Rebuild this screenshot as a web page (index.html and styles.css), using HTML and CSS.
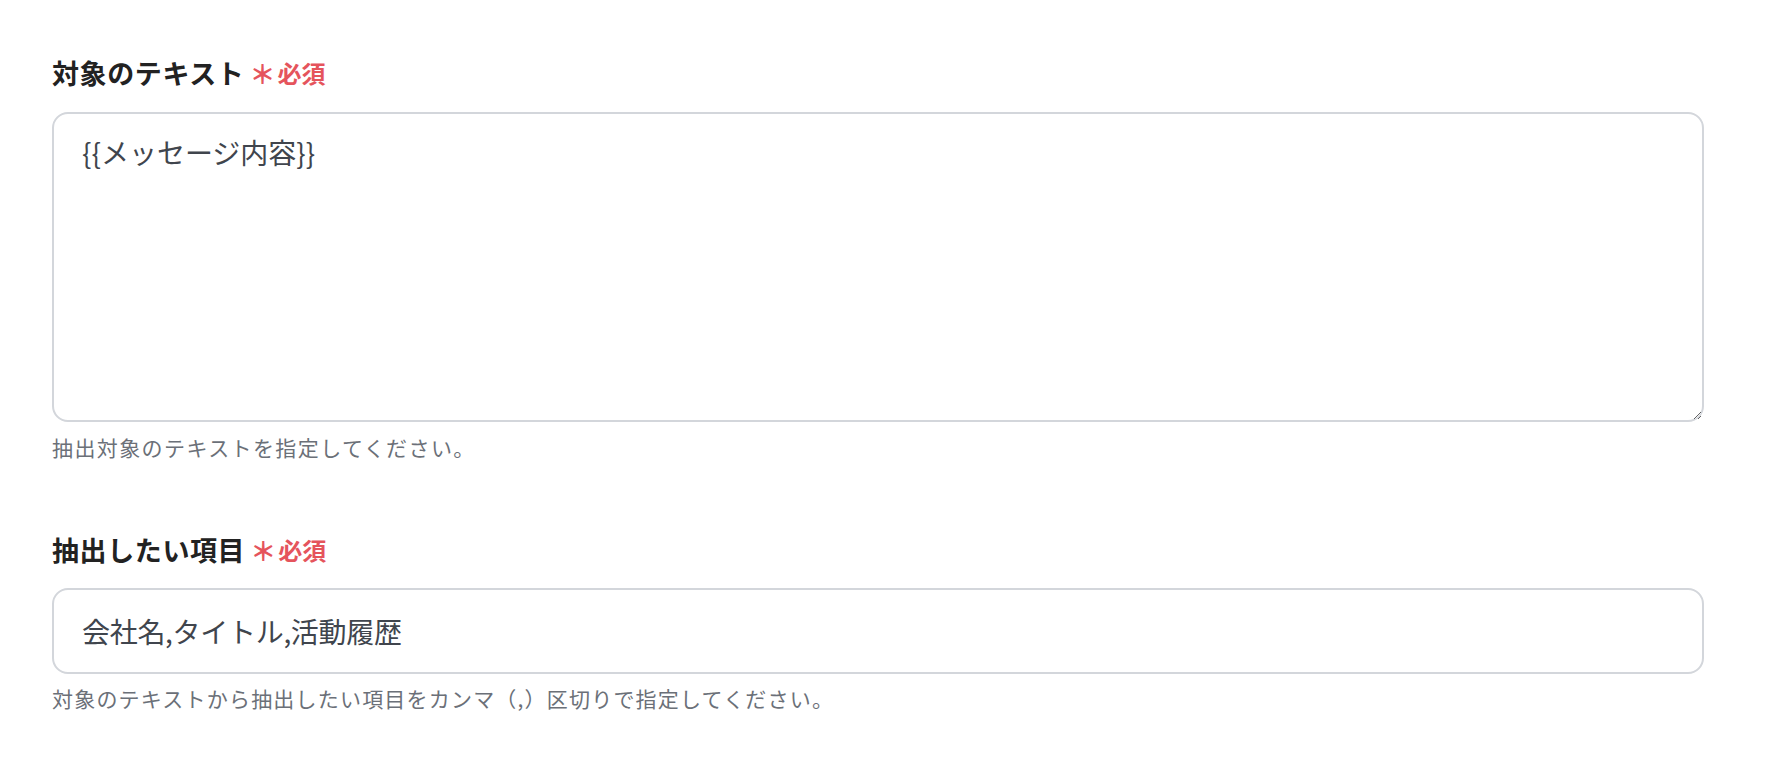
FILE: index.html
```html
<!DOCTYPE html>
<html lang="ja">
<head>
<meta charset="utf-8">
<link rel="stylesheet" href="styles.css">
</head>
<body>
<form class="form">
  <div class="field">
    <label class="label">対象のテキスト<span class="req"><span class="ast">＊</span>必須</span></label>
    <textarea class="textarea">{{メッセージ内容}}</textarea>
    <p class="help">抽出対象のテキストを指定してください。</p>
  </div>
  <div class="field field-2">
    <label class="label">抽出したい項目<span class="req"><span class="ast">＊</span>必須</span></label>
    <input class="input" type="text" value="会社名,タイトル,活動履歴">
    <p class="help help-2">対象のテキストから抽出したい項目をカンマ（,）区切りで指定してください。</p>
  </div>
</form>
</body>
</html>
```

FILE: styles.css
```css
html, body {
  margin: 0;
  padding: 0;
  background: #ffffff;
}
body {
  font-family: "Noto Sans CJK JP", "Noto Sans", sans-serif;
}
.form {
  padding: 55px 72px 0 52px;
  display: flex;
  flex-direction: column;
}
.field {
  display: flex;
  flex-direction: column;
}
.field-2 {
  margin-top: 70px;
}
.label {
  font-size: 27px;
  line-height: 36px;
  font-weight: 700;
  color: #222222;
  letter-spacing: 0.6px;
  display: flex;
  align-items: center;
}
.req {
  color: #e5545c;
  font-size: 24px;
  margin-left: 5px;
  letter-spacing: 0;
  display: inline-flex;
  align-items: center;
}
.ast {
  font-weight: 700;
  font-size: 26px;
  margin-right: 2px;
}
.textarea, .input {
  box-sizing: border-box;
  width: 100%;
  border: 2px solid #d3d6db;
  border-radius: 16px;
  background: #ffffff;
  font-family: "Noto Sans CJK JP", "Noto Sans", sans-serif;
  font-size: 28px;
  color: #40454d;
  outline: none;
  margin: 0;
}
.textarea {
  margin-top: 21px;
  height: 310px;
  padding: 20px 28px;
  line-height: 36px;
  resize: vertical;
}
.input {
  margin-top: 20px;
  height: 86px;
  padding: 0 28px;
  letter-spacing: -0.3px;
}
.help {
  margin: 10px 0 0;
  font-size: 21px;
  line-height: 30px;
  color: #6b7078;
  letter-spacing: 1.4px;
}
.field-2 .help-2 {
  margin-top: 9px;
  letter-spacing: 1.2px;
}
```
